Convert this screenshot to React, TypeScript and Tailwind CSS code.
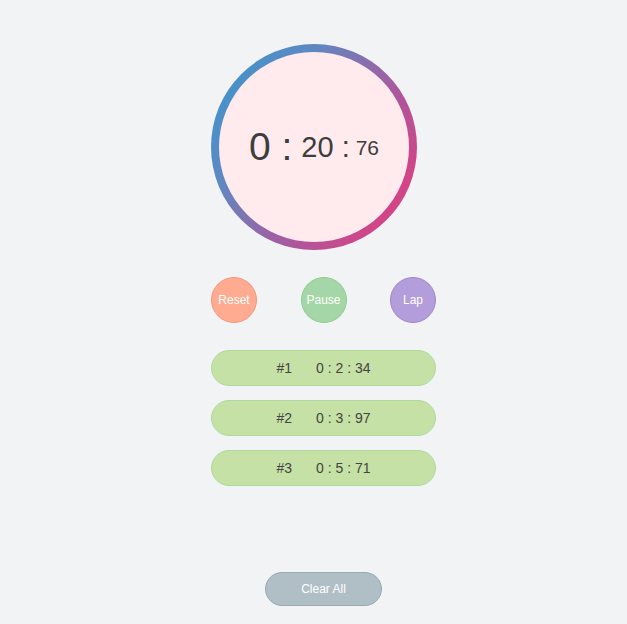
import React from "react";

const laps = [
  { n: 1, time: "0 : 2 : 34" },
  { n: 2, time: "0 : 3 : 97" },
  { n: 3, time: "0 : 5 : 71" },
];

export default function App() {
  return (
    <div
      className="min-h-[624px] w-full bg-[#f2f3f5] flex justify-center pl-[20px]"
      style={{ fontFamily: '"Liberation Sans", Arial, sans-serif' }}
    >
      <div className="w-[225px] flex flex-col pt-[44px]">
        <div className="w-[206px] h-[206px] rounded-full p-[8px] bg-[linear-gradient(125deg,#3699cf_0%,#5e88c2_30%,#b0559a_65%,#ee3777_100%)]">
          <div className="w-full h-full rounded-full bg-[#ffebee] flex items-center justify-center text-[#3d3d3d] pb-[2px]">
            <span className="text-[39px] leading-none">0 :</span>
            <span className="text-[29px] leading-none ml-[9px] mt-[2px]">20 :</span>
            <span className="text-[21px] leading-none ml-[6px] mt-[2px]">76</span>
          </div>
        </div>

        <div className="flex justify-between mt-[27px]">
          <button className="w-[46px] h-[46px] rounded-full bg-[#ffab91] border border-[#f5967a] text-white text-[12px]">
            Reset
          </button>
          <button className="w-[46px] h-[46px] rounded-full bg-[#a5d6a7] border border-[#8fcb92] text-white text-[12px]">
            Pause
          </button>
          <button className="w-[46px] h-[46px] rounded-full bg-[#b39ddb] border border-[#9f86cf] text-white text-[12px]">
            Lap
          </button>
        </div>

        <div className="flex flex-col gap-[14px] mt-[27px]">
          {laps.map((lap) => (
            <div
              key={lap.n}
              className="h-[36px] rounded-full bg-[#c5e1a5] border border-[#addaa0] flex items-center justify-center text-[14px] text-[#444]"
            >
              <span>#{lap.n}</span>
              <span className="ml-[24px]">{lap.time}</span>
            </div>
          ))}
        </div>

        <div className="flex justify-center mt-[86px]">
          <button className="w-[117px] h-[34px] rounded-full bg-[#b0bec5] border border-[#9aaab3] text-white text-[12px]">
            Clear All
          </button>
        </div>
      </div>
    </div>
  );
}
